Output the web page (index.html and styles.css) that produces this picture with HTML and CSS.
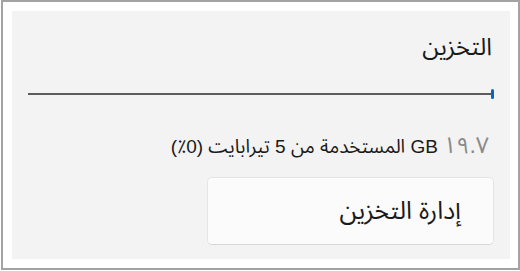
FILE: index.html
```html
<!DOCTYPE html>
<html lang="ar" dir="rtl">
<head>
    <meta charset="UTF-8">
    <meta name="viewport" content="width=device-width, initial-scale=1.0">
    <title>التخزين</title>
    <link rel="stylesheet" href="styles.css">
</head>
<body>
    <div class="frame">
        <div class="panel">
            <!-- Storage header -->
            <h2 class="title">التخزين</h2>

            <!-- Usage bar -->
            <div class="usage-bar">
                <div class="usage-bar-fill"></div>
            </div>

            <p class="usage-text"><span class="used">١٩.٧</span> GB المستخدمة من 5 تيرابايت (0٪)</p>

            <button class="manage-btn">إدارة التخزين</button>
        </div>
    </div>
</body>
</html>
```

FILE: styles.css
```css
body {
    margin: 0;
    padding: 0;
    font-family: "Liberation Sans", "Noto Sans Arabic", "Noto Naskh Arabic", "DejaVu Sans", sans-serif;
    background-color: #ffffff;
    color: #1a1a1a;
}

.frame {
    width: 519px;
    height: 270px;
    box-sizing: border-box;
    border: 2px solid #a3a3a3;
    padding: 9px 8px 9px 9px;
    background: #ffffff;
}

.panel {
    height: 100%;
    box-sizing: border-box;
    background-color: #f3f3f3;
    padding: 20px 18px 0 16px;
    display: flex;
    flex-direction: column;
    align-items: flex-start;
}

.title {
    margin: 0;
    font-size: 24px;
    font-weight: normal;
    line-height: 32px;
}

.usage-bar {
    align-self: stretch;
    margin: 30px -2px 0 0;
    height: 2px;
    background-color: #5c5c5c;
    position: relative;
}

.usage-bar-fill {
    position: absolute;
    right: 0;
    top: -4px;
    width: 3px;
    height: 10px;
    border-radius: 2px;
    background-color: #0a64c8;
}

.usage-text {
    margin: 37px 3px 0 0;
    font-size: 19px;
    line-height: 26px;
}

.used {
    color: #8a8a8a;
    font-size: 23px;
}

.manage-btn {
    margin: 17px -2px 0 0;
    width: 287px;
    height: 68px;
    box-sizing: border-box;
    padding: 0 32px 0 0;
    text-align: right;
    font-family: inherit;
    font-size: 25px;
    color: #1a1a1a;
    background-color: #fbfbfb;
    border: 1px solid #e5e5e5;
    border-bottom-color: #d6d6d6;
    border-radius: 5px;
}
```
